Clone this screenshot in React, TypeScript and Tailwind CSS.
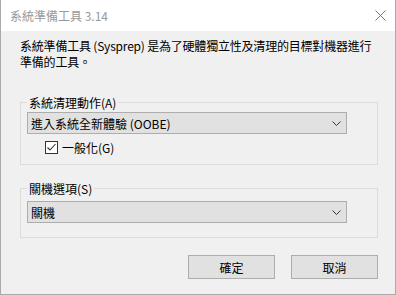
import { useState } from "react";

const FONT = "font-['Noto_Sans_CJK_TC','Noto_Sans',sans-serif]";

function Chevron() {
  return (
    <svg width="9" height="5" viewBox="0 0 9 5" className="shrink-0">
      <path d="M0.5 0.5 L4.5 4.5 L8.5 0.5" fill="none" stroke="#333" strokeWidth="1" />
    </svg>
  );
}

function Combo({ value }: { value: string }) {
  return (
    <div className="flex h-[22px] w-[320px] items-center justify-between border border-[#adadad] bg-[#e1e1e1] pl-[3px] pr-[5px] text-[12px] leading-[15px] text-black">
      <span>{value}</span>
      <Chevron />
    </div>
  );
}

export default function App() {
  const [generalize, setGeneralize] = useState(true);

  return (
    <div className={`${FONT} flex h-[295px] w-[396px] flex-col border-x border-b border-[#aaaaaa] bg-[#f0f0f0]`}>
      <div className="flex h-[31px] shrink-0 items-center justify-between bg-white pl-[9px] pr-[9px]">
        <span className="text-[12px] text-[#999999]">系統準備工具 3.14</span>
        <svg width="11" height="11" viewBox="0 0 11 11">
          <path d="M0.5 0.5 L10.5 10.5 M10.5 0.5 L0.5 10.5" stroke="#777" strokeWidth="1" />
        </svg>
      </div>

      <div className="flex flex-col pl-[19px] pr-[17px] pt-[7px] text-[12px] leading-[15px] text-black">
        <p className="whitespace-nowrap leading-[16px] tracking-[-0.2px]">
          系統準備工具 (Sysprep) 是為了硬體獨立性及清理的目標對機器進行
          <br />
          準備的工具。
        </p>

        <fieldset className="mt-[25px] w-[358px] border border-[#dcdcdc] px-[6px] pb-[9px]">
          <legend className="px-[2px] leading-[15px]">系統清理動作(A)</legend>
          <div className="mt-[2px]">
            <Combo value="進入系統全新體驗 (OOBE)" />
          </div>
          <label className="ml-[18px] mt-[6px] flex items-center gap-[4px]">
            <span
              onClick={() => setGeneralize(!generalize)}
              className="flex h-[13px] w-[13px] items-center justify-center border border-[#333333] bg-white"
            >
              {generalize && (
                <svg width="11" height="11" viewBox="0 0 11 11">
                  <path d="M1.5 5.5 L4 8 L9.5 2" fill="none" stroke="#333" strokeWidth="1.1" />
                </svg>
              )}
            </span>
            <span>一般化(G)</span>
          </label>
        </fieldset>

        <fieldset className="mt-[16px] w-[358px] border border-[#dcdcdc] px-[6px] pb-[14px]">
          <legend className="px-[2px] leading-[15px]">關機選項(S)</legend>
          <div className="mt-[5px]">
            <Combo value="關機" />
          </div>
        </fieldset>

        <div className="mt-[17px] flex justify-end gap-[16px]">
          <button className="h-[24px] w-[87px] border border-[#adadad] bg-[#e1e1e1] text-[12px]">確定</button>
          <button className="h-[24px] w-[87px] border border-[#adadad] bg-[#e1e1e1] text-[12px]">取消</button>
        </div>
      </div>
    </div>
  );
}
